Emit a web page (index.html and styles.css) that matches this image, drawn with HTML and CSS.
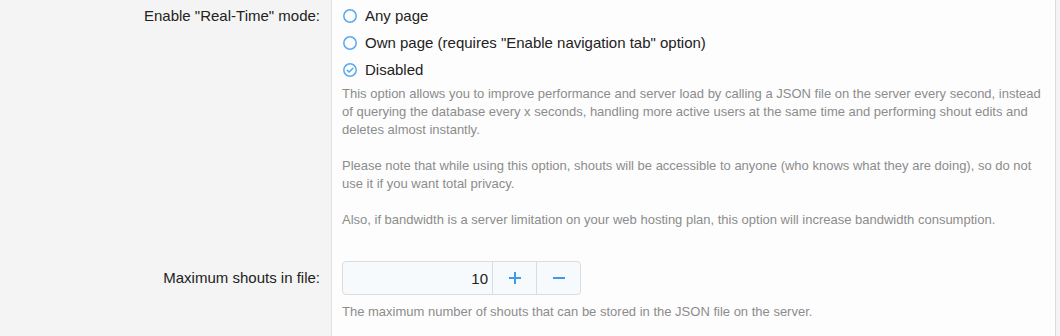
FILE: index.html
```html
<!DOCTYPE html>
<html>
<head>
  <title>Shoutbox settings</title>
  <link rel="stylesheet" href="styles.css">
</head>
<body>

  <div class="settings">
    <div class="row row-first">
      <div class="label">Enable "Real-Time" mode:</div>
      <div class="field">
        <div class="radio">
          <svg class="ico" width="14" height="14" viewBox="0 0 14 14"><circle cx="7" cy="7" r="6.2" fill="none" stroke="#5aa9ee" stroke-width="1.5"/></svg>
          <span>Any page</span>
        </div>
        <div class="radio">
          <svg class="ico" width="14" height="14" viewBox="0 0 14 14"><circle cx="7" cy="7" r="6.2" fill="none" stroke="#5aa9ee" stroke-width="1.5"/></svg>
          <span>Own page (requires "Enable navigation tab" option)</span>
        </div>
        <div class="radio">
          <svg class="ico" width="14" height="14" viewBox="0 0 14 14"><circle cx="7" cy="7" r="6.2" fill="none" stroke="#5aa9ee" stroke-width="1.5"/><path d="M4.2 7.2 L6.2 9.1 L9.9 5.2" fill="none" stroke="#5aa9ee" stroke-width="1.5" stroke-linecap="round" stroke-linejoin="round"/></svg>
          <span>Disabled</span>
        </div>
        <p class="help">This option allows you to improve performance and server load by calling a JSON file on the server every second, instead of querying the database every x seconds, handling more active users at the same time and performing shout edits and deletes almost instantly.<br><br>Please note that while using this option, shouts will be accessible to anyone (who knows what they are doing), so do not use it if you want total privacy.<br><br>Also, if bandwidth is a server limitation on your web hosting plan, this option will increase bandwidth consumption.</p>
      </div>
    </div>

    <div class="row row-second">
      <div class="label">Maximum shouts in file:</div>
      <div class="field">
        <div class="spinner">
          <input type="text" value="10">
          <button type="button" class="btn">
            <svg width="14" height="14" viewBox="0 0 14 14"><path d="M7 1 V13 M1 7 H13" stroke="#3d9be9" stroke-width="2"/></svg>
          </button>
          <button type="button" class="btn">
            <svg width="14" height="14" viewBox="0 0 14 14"><path d="M1 7 H13" stroke="#3d9be9" stroke-width="2"/></svg>
          </button>
        </div>
        <p class="help help-small">The maximum number of shouts that can be stored in the JSON file on the server.</p>
      </div>
    </div>
  </div>

</body>
</html>
```

FILE: styles.css
```css
body {
  margin: 0;
  background: #f4f4f4;
  font-family: "Liberation Sans", Arial, sans-serif;
  font-size: 15px;
  color: #222;
}

.settings {
  width: 1055px;
  height: 336px;
  background: #fdfdfd;
  border-right: 1px solid #dcdcdc;
  display: flex;
  flex-direction: column;
}

.row {
  display: flex;
}

.label {
  width: 320px;
  flex: none;
  background: #f4f4f4;
  border-right: 1px solid #e2e2e2;
  text-align: right;
  padding-right: 11px;
}

.field {
  flex: 1;
  padding: 0 12px 0 10px;
}

.row-first .label,
.row-first .field {
  padding-top: 2px;
  padding-bottom: 16px;
}

.row-first .label {
  line-height: 27px;
}

.row-second {
  flex: 1;
}

.row-second .label,
.row-second .field {
  padding-top: 16px;
}

.row-second .label {
  line-height: 34px;
}

.radio {
  display: flex;
  align-items: center;
  height: 27px;
}

.ico {
  margin-left: 1px;
  margin-right: 8px;
}

.help {
  margin: 2px 0 0;
  font-size: 13px;
  line-height: 18px;
  color: #8c8c8c;
}

.help-small {
  margin-top: 8px;
}

.spinner {
  display: flex;
  width: 239px;
  height: 34px;
  box-sizing: border-box;
  border: 1px solid #dcdcdc;
  border-radius: 4px;
  background: #f7fafd;
  overflow: hidden;
}

.spinner input {
  width: 149px;
  box-sizing: border-box;
  border: none;
  background: transparent;
  text-align: right;
  padding: 0 4px 0 0;
  font-family: inherit;
  font-size: 15px;
  color: #222;
  outline: none;
}

.btn {
  width: 44px;
  flex: 1;
  border: none;
  border-left: 1px solid #dcdcdc;
  background: transparent;
  padding: 0;
  display: flex;
  align-items: center;
  justify-content: center;
  cursor: pointer;
}
```
